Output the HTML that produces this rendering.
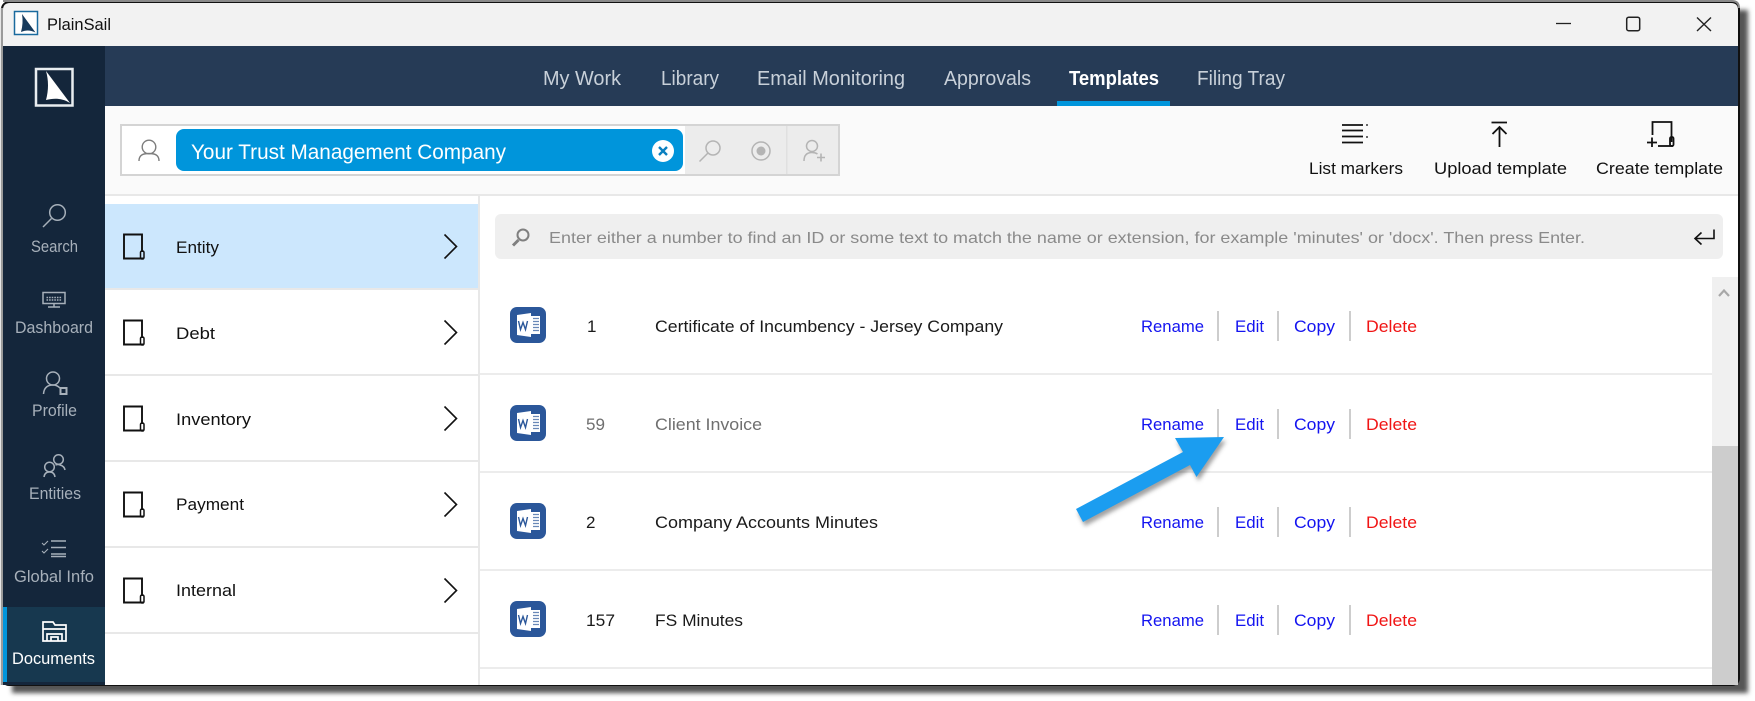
<!DOCTYPE html>
<html lang="en">
<head>
<meta charset="utf-8">
<title>PlainSail</title>
<style>
html,body{margin:0;padding:0;background:#fff;width:1755px;height:701px;overflow:hidden}
svg{display:block}
text{font-family:"Liberation Sans",sans-serif;white-space:pre}
.nav{font-size:20px;fill:#c8d0d9}
.side{font-size:16.5px;fill:#a7b0ba}
.tb{font-size:17px;fill:#111}
.cat{font-size:17px;fill:#111}
.row{font-size:17px;fill:#1a1a1a}
.dim{fill:#6f6f6f}
.blue{font-size:17px;fill:#1414f0}
.red{font-size:17px;fill:#f01414}
</style>
</head>
<body>
<svg width="1755" height="701" viewBox="0 0 1755 701" xmlns="http://www.w3.org/2000/svg">
<defs>
<filter id="s" x="-5%" y="-5%" width="110%" height="110%"><feGaussianBlur stdDeviation="2.5"/></filter>
<filter id="a" x="-20%" y="-20%" width="140%" height="140%"><feGaussianBlur stdDeviation="2"/></filter>
<g id="doc" fill="none" stroke="#111" stroke-width="1.900">
<path d="M142 252V234.500H124V258.500H144"/><rect x="140.500" y="251" width="3.500" height="8" rx="1.500" stroke-width="1.500"/>
</g>
<path id="chev" d="M444.500 234.500L456.500 246.500L444.500 258.500" fill="none" stroke="#111" stroke-width="1.600"/>
<g id="word">
<rect x="510" y="307" width="36" height="36" rx="7" fill="#2b579a"/>
<path d="M517 315L531 313V337L517 335Z" fill="#fff"/>
<rect x="531" y="316" width="9" height="18" fill="#fff"/>
<path d="M533 318.500h6M533 321.500h6M533 324.500h6M533 327.500h6M533 330.500h6" stroke="#2b579a" stroke-width="1.200" opacity=".7"/>
<path d="M518.500 321L520.500 329.500L523 322.500L525.500 329.500L527.500 321" fill="none" stroke="#2b579a" stroke-width="1.400"/>
</g>
<g id="acts">
<path d="M1218 311v30M1278 311v30M1350 311v30" stroke="#cdcdcd" stroke-width="2"/>
<text class="blue" x="1141" y="332" textLength="63" lengthAdjust="spacingAndGlyphs">Rename</text>
<text class="blue" x="1235" y="332" textLength="29" lengthAdjust="spacingAndGlyphs">Edit</text>
<text class="blue" x="1294" y="332" textLength="41" lengthAdjust="spacingAndGlyphs">Copy</text>
<text class="red" x="1366" y="332" textLength="51" lengthAdjust="spacingAndGlyphs">Delete</text>
</g>
</defs>

<!-- window shadow -->
<rect x="12" y="10" width="1736" height="683" fill="#555" filter="url(#s)"/>
<!-- window frame -->
<rect x="1" y="1" width="1739" height="685" rx="8" fill="#111"/>
<path d="M3 1H1732Q1739 1 1739 8" fill="none" stroke="#8a8a8a" stroke-width="2"/>
<path d="M2 8V685" stroke="#9a9a9a" stroke-width="2.500"/>
<path d="M3 46V10Q3 3 10 3H1731Q1738 3 1738 10V46Z" fill="#f2f2f2"/>
<rect x="3" y="46" width="1735" height="639" fill="#fff"/>

<!-- title bar -->
<rect x="14.500" y="11.500" width="23" height="23" fill="#fff" stroke="#1a6a9e" stroke-width="1.500"/>
<path d="M22 14L35.500 32.500C30 30 26 30 21 32Q23.500 23 22 14Z" fill="#163a5c"/>
<text x="47" y="30" font-size="17" fill="#111" textLength="64" lengthAdjust="spacingAndGlyphs">PlainSail</text>
<path d="M1556 23.500H1571" stroke="#222" stroke-width="1.300"/>
<rect x="1626.700" y="17.200" width="13" height="13.500" rx="2" fill="none" stroke="#222" stroke-width="1.500"/>
<path d="M1697 17.500L1711 31M1711 17.500L1697 31" stroke="#222" stroke-width="1.400"/>

<!-- top nav -->
<rect x="105" y="46" width="1633" height="60" fill="#263b56"/>
<text class="nav" x="543" y="85" textLength="78" lengthAdjust="spacingAndGlyphs">My Work</text>
<text class="nav" x="661" y="85" textLength="58" lengthAdjust="spacingAndGlyphs">Library</text>
<text class="nav" x="757" y="85" textLength="148" lengthAdjust="spacingAndGlyphs">Email Monitoring</text>
<text class="nav" x="944" y="85" textLength="87" lengthAdjust="spacingAndGlyphs">Approvals</text>
<text class="nav" x="1069" y="85" textLength="90" lengthAdjust="spacingAndGlyphs" style="fill:#fff;font-weight:700">Templates</text>
<text class="nav" x="1197" y="85" textLength="88" lengthAdjust="spacingAndGlyphs">Filing Tray</text>
<rect x="1057" y="101" width="113" height="5" fill="#0095db"/>

<!-- sidebar -->
<rect x="3" y="46" width="102" height="639" fill="#14263b"/>
<rect x="36" y="69" width="36.500" height="36.500" fill="none" stroke="#e9edf0" stroke-width="2.500"/>
<path d="M46 71L70 103C62 98 54 98 46 100Q50 85 46 71Z" fill="#fff"/>

<g fill="none" stroke="#a7b0ba" stroke-width="1.500">
<circle cx="57.500" cy="212.500" r="7.800"/><path d="M51.500 218.500L43 227"/>
<rect x="43" y="292.500" width="22" height="11"/>
<path d="M54 303.500V306.500M48 307H60"/>
<path d="M46.500 297.500h15M46.500 300h15" stroke-width="1.500" stroke-dasharray="1.600 1"/>
<circle cx="53" cy="378.500" r="6.500"/><path d="M43.500 394C44 387 48 385 53 385C56 385 58 386 60 388"/>
<rect x="60.500" y="388" width="6" height="6" stroke-width="2"/>
<circle cx="58.500" cy="459.500" r="4.800"/><circle cx="49.500" cy="467" r="4.800"/>
<path d="M44 477C44.500 473 47 472 49.500 472C52 472 54.500 473 55 477M55.500 465C57 464.500 59 464.500 60 465C62 465.500 64.500 467 65 470"/>
<path d="M51 541h15M51 547.500h15M51 554h15M51 556.500h15" stroke-width="1.400"/>
<path d="M42 543L44 545L48 541M42 551L44 553L48 549" stroke-width="1.100"/>
</g>
<text class="side" x="31" y="252" textLength="47" lengthAdjust="spacingAndGlyphs">Search</text>
<text class="side" x="15" y="333" textLength="78" lengthAdjust="spacingAndGlyphs">Dashboard</text>
<text class="side" x="32" y="416" textLength="45" lengthAdjust="spacingAndGlyphs">Profile</text>
<text class="side" x="29" y="499" textLength="52" lengthAdjust="spacingAndGlyphs">Entities</text>
<text class="side" x="14" y="582" textLength="80" lengthAdjust="spacingAndGlyphs">Global Info</text>
<rect x="3" y="607" width="102" height="75" fill="#17384f"/>
<rect x="3" y="607" width="4" height="75" fill="#0095db"/>
<g fill="none" stroke="#fff" stroke-width="1.700">
<path d="M43 641V622H53L55 625H66V641H43Z"/>
<path d="M43 629H66"/>
<path d="M47 641V634H62V641M51 641V637H58V641"/>
</g>
<text class="side" x="12" y="664" textLength="83" lengthAdjust="spacingAndGlyphs" style="fill:#fff">Documents</text>

<!-- toolbar -->
<rect x="105" y="106" width="1633" height="88" fill="#fafafa"/>
<rect x="105" y="194" width="1633" height="2" fill="#e8e8e8"/>

<rect x="121" y="125" width="718" height="50" fill="#fff" stroke="#d4d4d4" stroke-width="2"/>
<rect x="685" y="126" width="153" height="48" fill="#ececec"/>
<rect x="786" y="126" width="1.500" height="48" fill="#e0e0e0"/>
<g fill="none" stroke="#7d7d7d" stroke-width="1.400">
<circle cx="149" cy="147" r="6.800"/><path d="M139 161C139 155 143 153.500 149 153.500C155 153.500 159 155 159 161"/>
</g>
<rect x="176" y="129" width="507" height="42" rx="8" fill="#0095db"/>
<text x="191" y="159" font-size="21" fill="#fff" textLength="315" lengthAdjust="spacingAndGlyphs">Your Trust Management Company</text>
<circle cx="663" cy="151" r="11" fill="#fff"/>
<path d="M659 147L667 155M667 147L659 155" stroke="#0a7fc0" stroke-width="2.400"/>
<g fill="none" stroke="#b4b4b4" stroke-width="1.500">
<circle cx="713" cy="148" r="7"/><path d="M708 153L699.500 161.500"/>
<circle cx="761" cy="151" r="9"/>
<circle cx="812" cy="146" r="5.500"/><path d="M804 161C804 155 807 152.500 812 152.500C814.500 152.500 816 153 817.500 154"/>
<path d="M817 157.500H825M821 153.500V161.500" stroke-width="1.600"/>
</g>
<circle cx="761" cy="151" r="4.500" fill="#b4b4b4"/>

<g fill="none" stroke="#111" stroke-width="1.800">
<path d="M1342 125H1363M1342 130.500H1363M1342 136.500H1363M1342 142.500H1363"/>
<path d="M1366 125h2M1366 137h2" stroke-width="1.200"/>
<path d="M1491.500 122.500H1507M1499.500 147V127M1492.500 134L1499.500 127L1506.500 134"/>
<path d="M1652.500 135V122H1671.500V142"/>
<path d="M1658 146H1673"/>
<rect x="1670" y="137" width="3.500" height="9" rx="1.500"/>
<path d="M1647 142.500H1657M1652 137.500V147"/>
</g>
<text class="tb" x="1309" y="174" textLength="94" lengthAdjust="spacingAndGlyphs">List markers</text>
<text class="tb" x="1434" y="174" textLength="133" lengthAdjust="spacingAndGlyphs">Upload template</text>
<text class="tb" x="1596" y="174" textLength="127" lengthAdjust="spacingAndGlyphs">Create template</text>

<!-- left category list -->
<rect x="478" y="196" width="2" height="489" fill="#e8e8e8"/>
<rect x="105" y="204" width="373" height="84" fill="#cce7fd"/>
<path d="M105 289H478M105 375H480M105 461H478M105 547H478M105 633H478" stroke="#e8e8e8" stroke-width="2"/>
<use href="#doc"/><use href="#doc" y="86"/><use href="#doc" y="172"/><use href="#doc" y="258"/><use href="#doc" y="344"/>
<use href="#chev"/><use href="#chev" y="86"/><use href="#chev" y="172"/><use href="#chev" y="258"/><use href="#chev" y="344"/>
<text class="cat" x="176" y="253" textLength="43" lengthAdjust="spacingAndGlyphs">Entity</text>
<text class="cat" x="176" y="339" textLength="39" lengthAdjust="spacingAndGlyphs">Debt</text>
<text class="cat" x="176" y="425" textLength="75" lengthAdjust="spacingAndGlyphs">Inventory</text>
<text class="cat" x="176" y="510" textLength="68" lengthAdjust="spacingAndGlyphs">Payment</text>
<text class="cat" x="176" y="596" textLength="60" lengthAdjust="spacingAndGlyphs">Internal</text>

<!-- search bar -->
<rect x="495" y="214" width="1228" height="45" rx="6" fill="#efefef"/>
<g fill="none" stroke="#7f7f7f">
<circle cx="523" cy="235" r="5.500" stroke-width="2"/><path d="M518.500 240L513 245.500" stroke-width="3"/>
</g>
<text x="549" y="243" font-size="16" fill="#8a8a8a" textLength="1036" lengthAdjust="spacingAndGlyphs">Enter either a number to find an ID or some text to match the name or extension, for example 'minutes' or 'docx'. Then press Enter.</text>
<path d="M1714 229.500V238.500H1695.500M1701.500 232.500L1695 238.500L1701.500 244.500" fill="none" stroke="#111" stroke-width="1.600"/>

<!-- rows -->
<path d="M480 374H1712M480 472H1712M480 570H1712M480 668H1712" stroke="#ececec" stroke-width="2"/>
<use href="#word"/><use href="#word" y="98"/><use href="#word" y="196"/><use href="#word" y="294"/>
<use href="#acts"/><use href="#acts" y="98"/><use href="#acts" y="196"/><use href="#acts" y="294"/>
<text class="row" x="587" y="332">1</text>
<text class="row" x="655" y="332" textLength="348" lengthAdjust="spacingAndGlyphs">Certificate of Incumbency - Jersey Company</text>
<text class="row dim" x="586" y="430" textLength="19" lengthAdjust="spacingAndGlyphs">59</text>
<text class="row dim" x="655" y="430" textLength="107" lengthAdjust="spacingAndGlyphs">Client Invoice</text>
<text class="row" x="586" y="528">2</text>
<text class="row" x="655" y="528" textLength="223" lengthAdjust="spacingAndGlyphs">Company Accounts Minutes</text>
<text class="row" x="586" y="626" textLength="29" lengthAdjust="spacingAndGlyphs">157</text>
<text class="row" x="655" y="626" textLength="88" lengthAdjust="spacingAndGlyphs">FS Minutes</text>

<!-- scrollbar -->
<rect x="1712" y="277" width="26" height="170" fill="#f0f0f0"/>
<rect x="1712" y="446" width="26" height="239" fill="#cdcdcd"/>
<path d="M1719 296L1724 290.500L1729 296" fill="none" stroke="#a8a8a8" stroke-width="2.200"/>

<!-- arrow -->
<path d="M1224 437L1175 438L1183 452L1076 509L1083 522L1190 465L1196.500 477Z" fill="#444" opacity=".5" filter="url(#a)" transform="translate(2 4)"/>
<path d="M1224 437L1175 438L1183 452L1076 509L1083 522L1190 465L1196.500 477Z" fill="#1b9df0"/>
</svg>
</body>
</html>
